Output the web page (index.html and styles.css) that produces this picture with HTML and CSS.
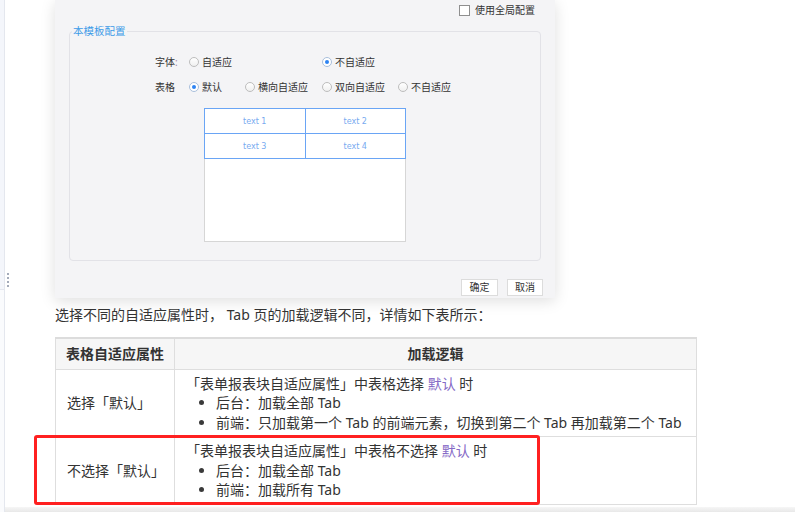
FILE: index.html
```html
<!DOCTYPE html>
<html lang="zh-CN">
<head>
<meta charset="utf-8">
<title>Tab 加载逻辑</title>
<link rel="stylesheet" href="styles.css">
</head>
<body>
<div class="app">
  <aside class="side">
    <div class="side-top"></div>
    <div class="side-bottom"></div>
    <div class="grip"><i></i><i></i><i></i><i></i></div>
  </aside>
  <div class="right">
    <main class="content">
      <section class="dialog">
        <div class="dlg-head">
          <label class="check"><span class="box"></span>使用全局配置</label>
        </div>
        <div class="group">
          <span class="legend">本模板配置</span>
          <div class="opts">
            <span class="lbl">字体<em>:</em></span>
            <span class="opt span2"><i class="radio"></i>自适应</span>
            <span class="opt span2"><i class="radio on"></i>不自适应</span>
            <span class="lbl">表格</span>
            <span class="opt"><i class="radio on"></i>默认</span>
            <span class="opt"><i class="radio"></i>横向自适应</span>
            <span class="opt"><i class="radio"></i>双向自适应</span>
            <span class="opt"><i class="radio"></i>不自适应</span>
          </div>
          <div class="preview">
            <table class="pv">
              <tr><td>text 1</td><td>text 2</td></tr>
              <tr><td>text 3</td><td>text 4</td></tr>
            </table>
          </div>
        </div>
        <div class="dlg-foot">
          <button class="btn ok">确定</button>
          <button class="btn">取消</button>
        </div>
      </section>

      <p class="intro">选择不同的自适应属性时， Tab 页的加载逻辑不同，详情如下表所示：</p>

      <div class="tbl-wrap">
        <table class="doc">
          <thead>
            <tr><th class="c1">表格自适应属性</th><th>加载逻辑</th></tr>
          </thead>
          <tbody>
            <tr>
              <td class="c1">选择「默认」</td>
              <td>
                <div class="line">「表单报表块自适应属性」中表格选择 <span class="kw">默认</span> 时</div>
                <ul class="dots">
                  <li>后台：加载全部 Tab</li>
                  <li>前端：只加载第一个 Tab 的前端元素，切换到第二个 Tab 再加载第二个 Tab</li>
                </ul>
              </td>
            </tr>
            <tr>
              <td class="c1">不选择「默认」</td>
              <td>
                <div class="line">「表单报表块自适应属性」中表格不选择 <span class="kw">默认</span> 时</div>
                <ul class="dots">
                  <li>后台：加载全部 Tab</li>
                  <li>前端：加载所有 Tab</li>
                </ul>
              </td>
            </tr>
          </tbody>
        </table>
        <div class="highlight"></div>
      </div>
    </main>
    <div class="hbar"></div>
  </div>
</div>
</body>
</html>
```

FILE: styles.css
```css
* { box-sizing: border-box; }

html, body {
  margin: 0;
  padding: 0;
  background: #fff;
}

body {
  font-family: "Noto Sans", "Noto Sans CJK SC", sans-serif;
  color: #333;
  width: 795px;
  height: 512px;
  overflow: hidden;
}

.app {
  display: flex;
  height: 512px;
}

/* left rail */
.side {
  position: relative;
  width: 5px;
  flex: none;
  display: flex;
  flex-direction: column;
  border-right: 1px solid #e4e7ee;
}
.side-top {
  height: 290px;
  background: #f4f6fb;
  border-bottom: 1px solid #e4e7ee;
}
.side-bottom {
  flex: 1;
  background: #fafbfd;
}
.grip {
  position: absolute;
  left: 7px;
  top: 273px;
  display: flex;
  flex-direction: column;
  gap: 2px;
}
.grip i {
  display: block;
  width: 2px;
  height: 2px;
  background: #a4abba;
}

.right {
  flex: 1;
  display: flex;
  flex-direction: column;
  min-width: 0;
}
.content {
  flex: 1;
  padding-left: 50px;
  overflow: hidden;
}
.hbar {
  height: 5px;
  flex: none;
  background: linear-gradient(#f6f6f6, #e8e8e8);
}

/* embedded dialog screenshot */
.dialog {
  width: 500px;
  height: 298px;
  background: #f4f4f6;
  box-shadow: 0 3px 14px rgba(0, 0, 0, 0.13);
  font-size: 10px;
  color: #333;
  display: flex;
  flex-direction: column;
}
.dlg-head {
  height: 31px;
  display: flex;
  justify-content: flex-end;
  align-items: flex-start;
  padding: 5px 20px 0 0;
}
.check {
  display: flex;
  align-items: center;
  line-height: 11px;
  height: 11px;
}
.box {
  width: 11px;
  height: 11px;
  border: 1px solid #8f8f8f;
  background: #fff;
  margin-right: 5px;
}

.group {
  position: relative;
  margin: 0 14px;
  height: 230px;
  border: 1px solid #e2e2e7;
  border-radius: 4px;
}
.legend {
  position: absolute;
  top: -8px;
  left: 2px;
  padding: 0 1px;
  font-size: 10.5px;
  line-height: 14px;
  color: #3d9be8;
  background: #f4f4f6;
}

.opts {
  display: grid;
  grid-template-columns: 34px 56px 77px 76px 80px;
  grid-auto-rows: 25px;
  align-items: center;
  padding-top: 17px;
  margin-left: 85px;
  line-height: 12px;
  white-space: nowrap;
}
.lbl {
  grid-column: 1;
}
.lbl em {
  font-style: normal;
  color: #a58aa8;
}
.opt {
  display: flex;
  align-items: center;
}
.span2 {
  grid-column: span 2;
}
.radio {
  flex: none;
  width: 10px;
  height: 10px;
  border: 1px solid #bdbdbd;
  border-radius: 50%;
  background: linear-gradient(#fff, #f0f0f0);
  margin-right: 3px;
  display: flex;
  align-items: center;
  justify-content: center;
}
.radio.on {
  border-color: #a9bfdc;
  background: #fff;
}
.radio.on::after {
  content: "";
  width: 4px;
  height: 4px;
  border-radius: 50%;
  background: #2d83f3;
}

.preview {
  margin: 9px 0 0 134px;
  width: 202px;
  height: 134px;
  background: #fff;
  border: 1px solid #d6d6d6;
}
.pv {
  border-collapse: collapse;
  width: 202px;
  margin: -1px 0 0 -1px;
  table-layout: fixed;
}
.pv td {
  border: 1px solid #6aa5f5;
  height: 25px;
  padding: 0;
  text-align: center;
  font-size: 8px;
  color: #78aaf0;
  font-family: "DejaVu Sans", sans-serif;
}

.dlg-foot {
  margin-top: 18px;
  display: flex;
  justify-content: flex-end;
  gap: 9px;
  padding-right: 12px;
}
.btn {
  height: 17px;
  width: 36px;
  padding: 0;
  border: 1px solid #dcdcdc;
  background: #fff;
  font-family: inherit;
  font-size: 10px;
  line-height: 15px;
  color: #333;
}
.btn.ok {
  width: 37px;
}

/* document text */
.intro {
  margin: 6px 0 0;
  font-size: 14px;
  line-height: 22px;
  color: #333;
}

.tbl-wrap {
  position: relative;
  margin-top: 11px;
  width: 642px;
}
.doc {
  width: 642px;
  border-collapse: collapse;
  font-size: 14px;
  color: #333;
  table-layout: fixed;
}
.doc th,
.doc td {
  border: 1px solid #dedede;
}
.doc th {
  border-top: 2px solid #dcdcdc;
  background: #f6f6f6;
  height: 31px;
  font-weight: bold;
  text-align: center;
  padding: 0;
  line-height: 20px;
}
.doc th.c1 { width: 119px; }
.doc td {
  padding: 4px 11px 4px 11px;
  line-height: 19.5px;
  vertical-align: top;
}
.doc td.c1 {
  vertical-align: middle;
}
.kw {
  color: #8569c6;
}
.dots {
  list-style: none;
  margin: 0;
  padding: 0;
}
.dots li {
  display: flex;
  align-items: center;
}
.dots li::before {
  content: "";
  flex: none;
  width: 5px;
  height: 5px;
  border-radius: 50%;
  background: #3a3a3a;
  margin: 0 12px 0 13px;
}

.highlight {
  position: absolute;
  left: -21px;
  top: 98px;
  width: 506px;
  height: 70px;
  border: 3px solid #ff2020;
  border-radius: 3px;
}
```
